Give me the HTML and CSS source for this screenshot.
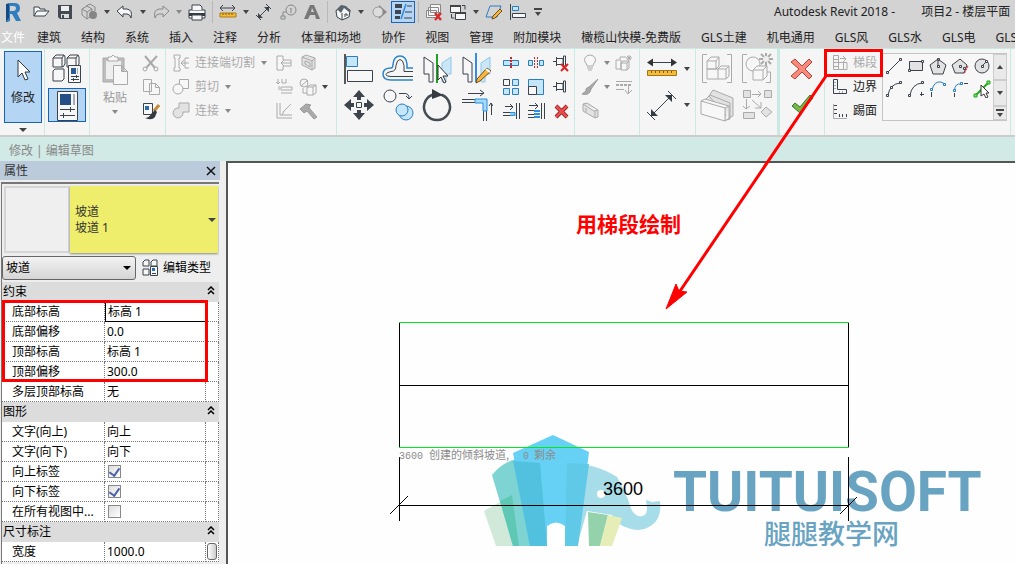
FILE: index.html
```html
<!DOCTYPE html>
<html lang="zh-CN">
<head>
<meta charset="utf-8">
<title>Autodesk Revit 2018</title>
<link rel="stylesheet" href="styles.css">
</head>
<body>
<div class="app">
<header class="titlebar">
  <button class="logo" aria-label="Revit"><svg width="24" height="22"><path d="M6 3l4-1v18l-4 1z" fill="#174a80"/><path fill-rule="evenodd" d="M9 2h5q6 0 6 5 0 4-3 5l4 8h-5l-4-7h-2v7H6l3-3zm1 3v5h3q3 0 3-3 0-2-3-2z" fill="#2f7ec0"/></svg></button>
  <div class="quick">
    <button class="qb" aria-label="打开"><svg width="18" height="18"><path class="k f" d="M2 13V4h5l1 2h5v2M2 13l3-5h12l-4 5z"/></svg></button>
    <button class="qb" aria-label="保存"><svg width="18" height="18"><path d="M2 2h14v14H4l-2-2z" fill="#434a54"/><path d="M5 3h8v5H5z" fill="#eee"/><path d="M5 11h8v4H5z" fill="#ddd"/><path d="M6 12h2v3H6z" fill="#434a54"/></svg></button>
    <button class="qb" aria-label="同步"><svg width="18" height="18"><path class="g8" d="M2 6l5-3 5 3v6l-5 4-5-4zM2 6l5 3 5-3M7 9v7M6 3l4-2 5 3v4"/><circle cx="13" cy="12" r="4" fill="#858585"/></svg></button>
    <button class="cb" aria-label="更多"></button>
    <button class="qb" aria-label="撤销"><svg width="18" height="18"><path class="k f" d="M1 8l6-5v3h4q6 1 4 9-1-4-4-4H7v3z"/></svg></button>
    <button class="cb" aria-label="更多"></button>
    <button class="qb" aria-label="重做"><svg width="18" height="18"><path class="g8" d="M17 8l-6-5v3H7q-6 1-4 9 1-4 4-4h4v3z"/></svg></button>
    <button class="cb dim" aria-label="更多"></button>
    <button class="qb" aria-label="打印"><svg width="18" height="18"><path class="k f" d="M1 7h16v8H1z"/><path d="M1 10h16v3H1z" fill="#333b44"/><path class="k f" d="M4 7V2h8l2 2v3M4 12h10v5H4z"/></svg></button>
    <span class="sep"></span>
    <button class="qb" aria-label="测量"><svg width="18" height="18"><path class="k" d="M1 5h15M4 2L1 5l3 3M13 2l3 3-3 3"/><path d="M1 10h16v4H1z" fill="#f4bc36" stroke="#b07a10"/><path d="M4 10v2M7 10v2M10 10v2M13 10v2" stroke="#8a5c00"/></svg></button>
    <button class="cb" aria-label="更多"></button>
    <button class="qb" aria-label="对齐尺寸标注"><svg width="18" height="18"><path class="k" d="M3 15L14 4M1 12l5 5M11 1l5 5"/><path d="M3 10v5h5zM9 4h5v5z" fill="#3a424c"/></svg></button>
    <button class="qb" aria-label="按类别标记"><svg width="18" height="18"><circle class="g8" cx="12" cy="7" r="5"/><path class="g8" d="M11 6l1-1v5M7 9H4v4M2 13h4v3H2z"/></svg></button>
    <button class="qb" aria-label="文字"><svg width="18" height="18"><path d="M1 16L7 2h4l6 14h-4l-1-4H7l-2 4zm7-7h3L9 5z" fill="#777" fill-rule="evenodd"/></svg></button>
    <span class="sep"></span>
    <button class="qb" aria-label="默认三维视图"><svg width="18" height="18"><path class="k f" d="M2 8l6-5 8 4-1 7-7 3-5-3z"/><path d="M1 8l6-6 5 1 5 5-2 1-5-4-3 5-3-3z" fill="#59636d"/><path class="k" d="M8 10v7M11 14v-3h2v2"/></svg></button>
    <button class="cb" aria-label="更多"></button>
    <button class="qb" aria-label="剖面"><svg width="18" height="18"><path d="M9 2l8 7-8 7z" fill="#888"/><circle cx="8" cy="9" r="5" fill="#ddd" stroke="#999"/></svg></button>
    <button class="qb on" aria-label="细线"><svg width="18" height="18"><path d="M1 1h7v4H1zM1 7h6v4H1zM1 13h5v3H1z" fill="#3d4651"/><path d="M12 1L7 16" stroke="#308be0" stroke-width="1.500"/><path class="k" d="M13 3h5M11 9h7M10 15h8"/></svg></button>
    <span class="sep"></span>
    <button class="qb" aria-label="关闭隐藏窗口"><svg width="18" height="18"><path class="g8 f" d="M5.500 1.500h10v8h-10zM3.500 4.500h10v8h-10zM1.500 7.500h10v7h-10z"/><path d="M10 10l6 7m0-7l-6 7" stroke="#d82c2c" stroke-width="2.500"/></svg></button>
    <button class="qb" aria-label="切换窗口"><svg width="18" height="18"><path class="k f" d="M1.500 2.500h10v7h-10zM6.500 9.500h10v7h-10z"/><path d="M1 3h11M6 10h11" stroke="#444" stroke-width="2"/><path class="k" d="M13 2.500h3v4M2.500 11v4h3"/></svg></button>
    <button class="cb" aria-label="更多"></button>
    <button class="qb" aria-label="编辑"><svg width="18" height="18"><path class="b" d="M5 3h11l-4 11H1z"/><path d="M8 13l7-7 2 2-7 7-3 1z" fill="#f6b83b" stroke="#704e20"/></svg></button>
    <button class="qb" aria-label="对齐"><svg width="18" height="18"><path class="k f" d="M1.500 1v16M3.500 10.500h13v4h-13z"/><path class="b f3" d="M3.500 3.500h6v4h-6z"/></svg></button>
    <button class="cb bar" aria-label="自定义"></button>
  </div>
  <span class="title">Autodesk Revit 2018 -</span><span class="doc">项目2 - 楼层平面</span>
</header>

<nav class="tabs">
  <button class="file">文件</button><button>建筑</button><button>结构</button><button>系统</button><button>插入</button><button>注释</button><button>分析</button><button>体量和场地</button><button>协作</button><button>视图</button><button>管理</button><button>附加模块</button><button>橄榄山快模-免费版</button><button>GLS土建</button><button>机电通用</button><button>GLS风</button><button>GLS水</button><button>GLS电</button><button>GLS</button>
</nav>

<section class="ribbon">
  <div class="panel p-mod">
    <div class="stack">
      <button class="modify on"><svg width="16" height="24"><path d="M3 2v17l4-4 3 7 3-1-3-7h5z" fill="#fff" stroke="#303840"/></svg><span>修改</span></button>
      <button class="cb wide" aria-label="选择"></button>
    </div>
  </div>
  <div class="panel p-prop">
    <div class="big">
      <button aria-label="类型属性"><svg width="34" height="34"><path class="k f" d="M3 6l3-3h8l1 2v7l-2 3H3zM3 6h9l2-3M12 6v9M17 6l3-3h8l1 2v7l-2 3H17zM17 6h9l2-3M26 6v9M3 19l2-2h9v10l-2 2H3z"/><path class="k f" d="M18.500 13.500h12v17h-12z"/><path d="M21 16h5v6h-5z" fill="#2c5c94"/><path d="M27.500 16v6" stroke="#a5adb6"/><path class="k" d="M21 24.500h8M26.500 23v3M21 27.500h8M23.500 26v3"/></svg></button>
      <button class="on" aria-label="属性"><svg width="34" height="34"><path class="k f" d="M7.500 2.500h20v29h-20z"/><path d="M10 5h11v11H10z" fill="#245087"/><path d="M23 5h2v11h-2z" fill="#a5adb6"/><path class="k" d="M10 20.500h15M20.500 18v5M10 26.500h15M13.500 24v5"/></svg></button>
    </div>
  </div>
  <div class="panel p-clip">
    <button class="paste"><svg width="28" height="32"><path d="M2 4h21v24H2z" fill="#bdbdbd" stroke="#aaa"/><path d="M5 7h15v18H5z" fill="#eee"/><path class="g f" d="M7 7V3h3l2-2 2 2h3v4zM12.500 11.500h8l6 6v13h-14zM20.500 11.500v6h6"/></svg><span>粘贴</span><i class="caret dim"></i></button>
    <div class="small">
      <button aria-label="剪切"><svg width="18" height="18"><path class="g" d="M3 2l10 12M15 2L4 14" stroke-width="2"/><circle class="g" cx="3" cy="15" r="2"/><circle class="g" cx="14" cy="15" r="2"/></svg></button>
      <button aria-label="复制"><svg width="18" height="18"><path class="g f" d="M1.500 1.500h8v12h-8zM7.500 5.500h6l4 4v7h-10zM13.500 5.500v4h4"/></svg></button>
      <button aria-label="匹配类型"><svg width="18" height="18"><path class="k f" d="M1.500 1.500h9v11h-9z"/><path d="M3 4h4v4H3z" fill="#286eac"/><path d="M17 3l-5 6" stroke="#c78a3a" stroke-width="3"/><path d="M13 8L9 12q-2 4-6 4 7 3 10-1l2-5z" fill="#343b43"/></svg></button>
    </div>
  </div>
  <div class="panel p-geo">
    <div class="list dimmed">
      <button><svg width="18" height="18"><path class="g f" d="M2 1h6v3H7v10h1v3H2v-3h1V4H2zM17 4h-4v10h4M17 9H9M12 6L9 9l3 3"/></svg><span>连接端切割</span><i class="caret"></i></button>
      <button><svg width="18" height="18"><path class="g f" d="M7.500 1.500h9v9h-9z"/><circle class="g f" cx="6" cy="11" r="5"/></svg><span>剪切</span><i class="caret"></i></button>
      <button><svg width="18" height="18"><path class="g f2" d="M7 1h10v9h-6a5 5 0 1 1-4-4z"/></svg><span>连接</span><i class="caret"></i></button>
    </div>
    <div class="small">
      <button aria-label="墙连接"><svg width="18" height="18"><path class="g f" d="M2 2h6v4h8v6H8v4H2zM16 9H6M9 6L6 9l3 3"/></svg></button>
      <button aria-label="梁连接"><svg width="18" height="18"><path class="g" d="M3 1v5M1 4l2 2 2-2M7 1v4h4V1M6 9h11v3H6zM6 15h11M4 8v4"/></svg></button>
      <button aria-label="拆分"><svg width="18" height="18"><path class="g" d="M2 1v15h15M5 1v12h12M8 10l8-8M7 13l2-4 7-7"/></svg></button>
    </div>
    <div class="small">
      <button aria-label="墙洞口"><svg width="18" height="18"><path class="g f2" d="M3 3l4-2 9 3v10l-3 2-10-5zM3 3l10 4v9M13 7l3-3M6 7l5 2v4l-5-3z"/></svg></button>
      <button aria-label="填色"><svg width="18" height="18"><circle class="g" cx="5" cy="5" r="4"/><path class="g f" d="M2 8l7-6M4 10v5h4M8 9l3-2h6v8l-3 2H8zM8 9h6v8M14 9l3-2"/></svg></button>
      <button aria-label="拆除"><svg width="18" height="18"><path d="M1 7l6-5 5 1-2 2 1 2 7 8-3 2-7-8-3 2z" fill="#aaa" stroke="#999"/></svg></button>
    </div>
    <div class="small narrow"><span></span><button class="cb" aria-label="更多"></button></div>
  </div>
  <div class="panel p-edit">
    <div class="big two">
      <button aria-label="对齐"><svg width="34" height="34"><path d="M3 2v30" stroke="#222" stroke-width="1.500"/><path class="b f3" d="M4.500 4.500h11v10h-11z"/><path class="k f" d="M5.500 18.500h25v11h-25z"/></svg></button>
      <button aria-label="偏移"><svg width="34" height="34"><path d="M32 28H10q-8 0-8-6t8-6q2 0 2-4 1-8 7-8t7 8v4h6" fill="none" stroke="#2b85c8" stroke-width="1.500"/><path class="k" d="M32 24.500H10q-5 0-5-2t5-3q5 0 5-6 1-6 4-6t4 6v6h9"/></svg></button>
      <button aria-label="镜像-拾取轴"><svg width="34" height="34"><path class="k f" d="M4 5l9 6v19H9v-8H4z"/><path d="M31 5l-9 6v19h4v-8h5z" fill="#cbe6f7" stroke="#8ec6e8"/><path d="M17 2v29" stroke="#21a121" stroke-width="2"/><path d="M18 13v15l3-3 3 6 2-1-3-6h5z" fill="#fff" stroke="#333"/></svg></button>
      <button aria-label="镜像-绘制轴"><svg width="34" height="34"><path class="k f" d="M4 5l9 6v19H9v-8H4z"/><path d="M31 5l-9 6v19h4v-8h5z" fill="#cbe6f7" stroke="#8ec6e8"/><path d="M17 1v29" stroke="#348ee0" stroke-width="2"/><path d="M18 27l10-11 4 3-11 10-4 2z" fill="#fbb737" stroke="#70481b"/><path d="M27 17l4 3" stroke="#fff" stroke-width="2"/></svg></button>
      <button aria-label="移动"><svg width="34" height="34"><path class="k f" d="M14.500 14.500h5v5h-5z"/><path d="M17 2l6 7h-4v3h-4V9h-4zM17 32l6-7h-4v-3h-4v3h-4zM2 17l7-6v4h3v4H9v4zM32 17l-7-6v4h-3v4h3v4z" fill="#3d444c"/></svg></button>
      <button aria-label="复制"><svg width="34" height="34"><circle class="k f" cx="9" cy="8" r="6"/><circle class="b f3" cx="25" cy="25" r="7"/><circle class="b f3" cx="21" cy="22" r="6"/><path class="k" d="M18 5.500h6q4 0 4 5M25 8l3 3 3-3"/></svg></button>
      <button aria-label="旋转"><svg width="34" height="34"><path d="M22 7a13 13 0 1 1-10 0" fill="none" stroke="#444b53" stroke-width="2.500" stroke-linecap="round"/><path d="M12 1l11 6-11 4z" fill="#343b43"/></svg></button>
      <button aria-label="修剪/延伸为角"><svg width="34" height="34"><path class="k" d="M3 11.500h13M3 14.500h13M24.500 22v11M27.500 22v11M9 5.500h15M21 2l4 3-4 3M32.500 27V15M30 18l2-3 2 3"/><path d="M16 11h12v12h-4v-8h-8z" fill="#a5dafa" stroke="#2d8fdd"/></svg></button>
    </div>
    <div class="tools">
      <button aria-label="拆分图元"><svg width="18" height="18"><path class="b f3" d="M1.500 6.500h15v5h-15z"/><path d="M9 3v12" stroke="#c92727" stroke-width="2" stroke-dasharray="2 1"/></svg></button>
      <button aria-label="用间隙拆分"><svg width="18" height="18"><path class="b f3" d="M1.500 6.500h4v5h-4zM12.500 6.500h4v5h-4z"/><path d="M7.500 3v12M10.500 3v12" stroke="#c92727" stroke-dasharray="2 1"/></svg></button>
      <button aria-label="解锁"><svg width="18" height="18"><path class="k f" d="M1 7.500h4M4.500 3v9M5 4.500h6v6H5M11.500 2v10h2V2z"/><path d="M9 10l7 7m0-7l-7 7" stroke="#d22" stroke-width="2"/></svg></button>
      <button aria-label="阵列"><svg width="18" height="18"><path class="k f" d="M1.500 1.500h6v6h-6z"/><path class="b f3" d="M10.500 1.500h6v6h-6zM1.500 10.500h6v6h-6zM10.500 10.500h6v6h-6z"/></svg></button>
      <button aria-label="缩放"><svg width="18" height="18"><path class="b f3" d="M1.500 1.500h15v15h-15z"/><path class="k f" d="M1.500 8.500h8v8h-8z"/></svg></button>
      <button aria-label="锁定"><svg width="18" height="18"><path class="k f" d="M1 8.500h4M4.500 4v9M5 5.500h6v6H5M11.500 3v11h2V3z"/></svg></button>
      <button aria-label="修剪单个图元"><svg width="18" height="18"><path class="k" d="M3 4.500h8M8 2l3 3-3 3M1 10.500h7M1 13.500h7M14.500 1v16M17.500 1v16"/><path d="M8 10.500h5v3H8" fill="#8ccdf5" stroke="#2d8fdd"/></svg></button>
      <button aria-label="修剪多个图元"><svg width="18" height="18"><path class="k" d="M2 3.500h8M8 1l3 3-3 3M1 8.500h6M1 12.500h6M1 15.500h6M14.500 1v16M17.500 1v16"/><path d="M7 9h6M7 12h6M7 15h6" stroke="#2d8fdd" stroke-width="2"/></svg></button>
      <button aria-label="删除"><svg width="18" height="18"><path d="M4 4l11 11M15 4L4 15" stroke="#8e1616" stroke-width="4"/><path d="M4 4l11 11M15 4L4 15" stroke="#e94e4e" stroke-width="2.500"/></svg></button>
    </div>
  </div>
  <div class="panel p-view">
    <div class="small">
      <button aria-label="在视图中隐藏"><svg width="18" height="18"><path class="g f" d="M6 12q0-2-2-4-2-6 5-7 7 1 5 7-2 2-2 4zM6 14h6M7 16h4"/></svg></button>
      <button aria-label="替换"><svg width="18" height="18"><path d="M17 1L8 9l2 2zM8 9q-4 1-3 4l-4 3q8 2 9-5z" fill="#aaa" stroke="#999"/></svg></button>
      <button aria-label="线处理"><svg width="18" height="18"><path class="g f2" d="M2 2l4-1 11 7v7l-3 1L2 9zM2 2l11 7 4-1M14 9v7M5 6v4"/></svg></button>
    </div>
    <div class="small narrow"><button class="cb dim" aria-label="更多"></button><button class="cb dim" aria-label="更多"></button></div>
    <div class="small">
      <button aria-label="置换图元"><svg width="18" height="18"><path class="g f" d="M1 6h5v9H1zM6 9l2-2h6v7l-2 2H6zM6 9h6v7M12 9l2-2M5 5V3h6M14 1v6M11 4h6M12 2l4 4M16 2l-4 4"/></svg></button>
      <button aria-label="线"><svg width="18" height="18"><path class="g" d="M1 3.500h16M1 11.500h8M13.500 8v7M10 12l3 4 4-4"/><path d="M1 7h16" stroke="#aaa" stroke-width="2" stroke-dasharray="3 1"/></svg></button>
    </div>
  </div>
  <div class="panel p-meas">
    <div class="big">
      <button aria-label="测量"><svg width="34" height="34"><path class="k" d="M3 10.500h28"/><path d="M2 10.500l6-4v8zM32 10.500l-6-4v8z" fill="#333"/><path d="M2.500 18.500h29v5h-29z" fill="#f2bd3c" stroke="#a87412"/><path d="M6.500 19v2M10.500 19v2M14.500 19v2M18.500 19v2M22.500 19v2M26.500 19v2" stroke="#805700"/></svg></button>
      <button aria-label="尺寸标注"><svg width="34" height="34"><path class="k" d="M6 28L27 7M2 24l8 8M23 3l8 8"/><path d="M6 21v7h7zM20 7h7v7z" fill="#333b43"/></svg></button>
    </div>
    <div class="big narrow"><button class="cb" aria-label="更多"></button><button class="cb" aria-label="更多"></button></div>
  </div>
  <div class="panel p-create">
    <div class="big two">
      <button aria-label="创建组"><svg width="34" height="34"><path class="g f" d="M7 2.500H2.500v28H7M27 2.500h4.500v28H27M7 9l4-4h8v9l-3 3H7zM7 9h9v8M16 9l3-4M7 17h11v10H7zM18 17l3-3h8v10l-3 3h-8M18 17h8v10M26 17l3-3"/></svg></button>
      <button aria-label="创建类似"><svg width="34" height="34"><path class="g f" d="M7 2.500H2.500v28H7M26 20h4.500v10.500H26"/><circle class="g f" cx="13" cy="12" r="7"/><path class="g f" d="M13 18l4-4h10v10l-4 4H13zM13 18h10v10M23 18l4-4"/><path d="M26 1v13M19 7h14M21 2l10 10M31 2L21 12" stroke="#aaa" stroke-width="2"/><circle cx="26" cy="7" r="3" fill="#eee"/></svg></button>
      <button aria-label="创建部件"><svg width="34" height="34"><path class="g f2" d="M9 8l4-6 20 8v18l-5 2zM5 12l5-5 20 8v16l-4 1z"/><path class="g f" d="M1 13l24 7v13L1 26zM1 13l4-2 24 7-4 2M29 18v12l-4 3"/></svg></button>
      <button aria-label="创建零件"><svg width="34" height="34"><path class="g f2" d="M3.500 2.500h7v7h-7zM24.500 2.500h7v7h-7zM3.500 24.500h11v6h-11zM21 24l5-5 6 5-6 5z"/><path class="g" d="M12 6.500h9M18 3l3 3-3 3M6.500 11v10M3 18l3 3 4-3M12 12l9 8M21 14v6h-6"/></svg></button>
    </div>
  </div>
  <div class="panel p-mode">
    <div class="big">
      <button aria-label="取消编辑模式"><svg width="34" height="34"><path d="M10 7l7 7 7-7 3 3-7 7 7 7-3 3-7-7-7 7-4-3 8-7-8-7z" fill="#f88a7c" stroke="#b94137"/></svg></button>
      <button aria-label="完成编辑模式"><svg width="34" height="34"><path d="M7 18l3-3 5 4L25 7l3 3-13 15z" fill="#74b84a" stroke="#37762a"/></svg></button>
    </div>
  </div>
  <div class="panel p-draw">
    <div class="list">
      <button class="dimmed"><svg width="18" height="18"><path class="g" d="M3.500 1.500h5v14h-5zM3 5.500h6M3 8.500h14M3 12.500h6M9 15.500h8v-7M13.500 9v6M10 4.500h6M13 2l3 3-3 3"/></svg><span>梯段</span></button>
      <button><svg width="18" height="18"><path class="k" d="M3.500 1.500h4v10h9v4h-13z"/><path class="g" d="M4 4.500h2M4 7.500h2M4 10.500h2M9.500 13v2M12.500 13v2"/></svg><span>边界</span></button>
      <button><svg width="18" height="18"><path class="g" d="M3.500 2v14.500H17"/><path class="k" d="M4 3.500h3M4 7.500h3M4 11.500h3M9.500 12v3M12.500 12v3M16.500 12v3"/></svg><span>踢面</span></button>
    </div>
    <div class="gallery">
      <div class="shapes">
        <button aria-label="线"><svg width="18" height="18"><path class="k" d="M3 15L15 3"/><path class="k f" d="M1.500 14.500h2v2h-2zM14.500 1.500h2v2h-2z"/></svg></button>
        <button aria-label="矩形"><svg width="18" height="18"><path class="k f2" d="M2.500 4.500h13v9h-13z"/><path class="k f" d="M1.500 12.500h2v2h-2zM14.500 3.500h2v2h-2z"/></svg></button>
        <button aria-label="内接多边形"><svg width="18" height="18"><path class="k f2" d="M9 2l8 6-3 9H4L1 8z"/><path class="k f" d="M9 2v7M8.500 1.500h2v2h-2zM8.500 8.500h2v2h-2z"/></svg></button>
        <button aria-label="外接多边形"><svg width="18" height="18"><path class="k f2" d="M9 2l7 6-3 8H4L1 8z"/><path class="k f" d="M8.500 8.500h2v2h-2zM12.500 10.500h2v2h-2z"/><path d="M17 9l-4 8" stroke="red" stroke-dasharray="2 1"/></svg></button>
        <button aria-label="圆形"><svg width="18" height="18"><circle class="k f2" cx="9" cy="9" r="7"/><path class="k f" d="M9 9l4-4M8.500 8.500h2v2h-2zM12.500 3.500h2v2h-2z"/></svg></button>
        <button aria-label="起点-终点-半径弧"><svg width="18" height="18"><path class="k" d="M3 15Q5 4 15 3"/><path class="k f" d="M1.500 14.500h2v2h-2zM5.500 6.500h2v2h-2zM14.500 1.500h2v2h-2z"/></svg></button>
        <button aria-label="圆心-端点弧"><svg width="18" height="18"><path class="k" d="M3 15Q5 4 15 3M14.500 12v4M13 14.500h4"/><path class="k f" d="M1.500 14.500h2v2h-2zM14.500 1.500h2v2h-2z"/></svg></button>
        <button aria-label="相切-端点弧"><svg width="18" height="18"><path class="k" d="M2.500 12v5"/><path class="b" d="M3 10Q5 1 12 2l4 2"/><path class="b f" d="M1.500 8.500h2v2h-2zM14.500 3.500h2v2h-2z"/></svg></button>
        <button aria-label="圆角弧"><svg width="18" height="18"><path class="k" d="M3.500 13v4M13 3.500h4"/><path class="b" d="M3.500 11q0-8 7-7"/><path class="b f" d="M2.500 9.500h2v2h-2zM9.500 2.500h2v2h-2z"/></svg></button>
        <button aria-label="拾取线"><svg width="18" height="18"><path d="M2 16L16 2" stroke="#23a81c" stroke-width="2"/><path d="M1 14h3v3H1zM14 1h3v3h-3z" fill="#7fde70" stroke="#23a81c"/><path d="M8 5v11l3-2 2 4 2-1-2-4h3z" fill="#fff" stroke="#333"/></svg></button>
      </div>
      <div class="spin"><button class="cb up" aria-label="上一行"></button><button class="cb" aria-label="下一行"></button><button class="cb bar" aria-label="展开"></button></div>
    </div>
  </div>
</section>

<div class="context">修改 | 编辑草图</div>

<main class="work">
  <aside class="props">
    <div class="props-head"><span>属性</span><button aria-label="关闭"><svg width="10" height="10"><path d="M1 1l8 8M9 1L1 9" stroke="#111" stroke-width="1.500"/></svg></button></div>
    <div class="props-body">
      <div class="type"><div class="preview"></div><button class="type-name"><span>坡道<br>坡道 1</span><i class="caret"></i></button></div>
      <div class="filter">
        <div class="pick"><select aria-label="类别"><option>坡道</option></select><i class="caret"></i></div>
        <button class="edit-type"><svg width="18" height="18"><path class="k f" d="M2 3l2-2h4v6H2zM10 3l2-2h4v6h-6zM2 10h6v6H2z"/><path class="k f" d="M9.500 7.500h7v9h-7z"/><path d="M11 9h3v3h-3z" fill="#286eac"/><path class="k" d="M11 14.500h4"/></svg><span>编辑类型</span></button>
      </div>
      <table class="grid">
        <colgroup><col class="c-name"><col><col class="c-end"></colgroup>
        <tbody>
        <tr class="group"><th colspan="2">约束</th><th><button class="fold" aria-label="折叠"><svg width="8" height="10"><path d="M1 4l3-3 3 3M1 8l3-3 3 3"/></svg></button></th></tr>
        <tr><td><label for="v1">底部标高</label></td><td class="sel"><input id="v1" value="标高 1"></td><td></td></tr>
        <tr><td><label for="v2">底部偏移</label></td><td><input id="v2" value="0.0"></td><td></td></tr>
        <tr><td><label for="v3">顶部标高</label></td><td><input id="v3" value="标高 1"></td><td></td></tr>
        <tr><td><label for="v4">顶部偏移</label></td><td><input id="v4" value="300.0"></td><td></td></tr>
        <tr><td><label for="v5">多层顶部标高</label></td><td><input id="v5" value="无"></td><td></td></tr>
        <tr class="group"><th colspan="2">图形</th><th><button class="fold" aria-label="折叠"><svg width="8" height="10"><path d="M1 4l3-3 3 3M1 8l3-3 3 3"/></svg></button></th></tr>
        <tr><td><label for="v6">文字(向上)</label></td><td><input id="v6" value="向上"></td><td></td></tr>
        <tr><td><label for="v7">文字(向下)</label></td><td><input id="v7" value="向下"></td><td></td></tr>
        <tr><td><label for="v8">向上标签</label></td><td><input id="v8" type="checkbox" checked></td><td></td></tr>
        <tr><td><label for="v9">向下标签</label></td><td><input id="v9" type="checkbox" checked></td><td></td></tr>
        <tr><td><label for="v10">在所有视图中...</label></td><td><input id="v10" type="checkbox"></td><td></td></tr>
        <tr class="group"><th colspan="2">尺寸标注</th><th><button class="fold" aria-label="折叠"><svg width="8" height="10"><path d="M1 4l3-3 3 3M1 8l3-3 3 3"/></svg></button></th></tr>
        <tr><td><label for="v11">宽度</label></td><td><input id="v11" value="1000.0"></td><td><button class="assoc" aria-label="关联参数"></button></td></tr>
        </tbody>
      </table>
    </div>
  </aside>
  <div class="canvas">
    <svg class="plan" width="787" height="401" viewBox="228 163 787 401">
      <g class="brand">
        <path d="M484 511l28-16 9 51h-25z" fill="#d0e9d9"/>
        <path d="M492 475q14-17 34-17l14 5 8 83h-35z" fill="#7dd4d2"/>
        <path d="M500 501l12-6 7 51h-6z" fill="#5ec8b4"/>
        <path d="M567 463q28 0 50 14 7 12 12 25 2 11 9 14 9 2 9-8l-1-8 6 2 8-1q2 17-8 24-11 8-24 3-11-3-16-13l-25-4-10 35h-16z" fill="#a7dde8"/>
        <path d="M513 453l40-18 36 17-12 94h-47z" fill="#66d1f5"/>
        <path d="M513 461l27 2 7 83h-17z" fill="#51c1df"/>
        <path d="M567 463l22 1-11 82h-13z" fill="#60c9e7"/>
        <path d="M588 512l20 3-8 31h-11z" fill="#93d2ab"/>
        <path d="M608 515l14 3-10 28h-12z" fill="#e7edb7"/>
        <path d="M547 546v-20q9-7 18 0v20z" fill="#fff"/>
        <circle cx="601" cy="494" r="4" fill="#fff"/>
        <text x="673" y="511" class="brand-en">TUITUISOFT</text>
        <text x="764" y="544" class="brand-cn">腿腿教学网</text>
      </g>
      <path class="ink" d="M399.500 322v125M848.500 322v125M399 385.500h450M399.500 457v64M848.500 457v64M399 505.500h450M390 514l18-18M840 514l17-17"/>
      <path class="edge" d="M399 322.500h450M399 447.500h450"/>
      <text y="459" class="hint"><tspan x="399" class="num">3600</tspan> <tspan x="429">创建的倾斜坡道,</tspan> <tspan x="523" class="num">0</tspan> <tspan x="534">剩余</tspan></text>
      <text x="603" y="495" class="measure">3600</text>
      <text x="576" y="232" class="callout">用梯段绘制</text>
    </svg>
  </div>
</main>
<svg class="marks" width="1015" height="564"><path d="M3.500 301.500h203v79h-203zM825.500 50.500h56v25h-56z"/><path d="M826 76L676 297"/><path class="tip" d="M666 309l10-25 3 7 8 1z"/></svg>
</div>
</body>
</html>
```
FILE: styles.css
```css
* { box-sizing: border-box; }
body { margin: 0; font: 12px/16px "Noto Sans", "Noto Sans CJK SC", sans-serif; color: #222; background: #eee; }
button, input, select { font: inherit; color: inherit; }
button { padding: 0; border: 0; background: none; }
svg { display: block; flex: none; }
.app { position: relative; display: flex; flex-direction: column; height: 100vh; overflow: hidden; }

.k { stroke: #3a424c; fill: none; }
.g { stroke: #aaa; fill: none; }
.g8 { stroke: #888; fill: none; }
.b { stroke: #2a7fc0; fill: none; }
.f { fill: #f7f7f7; }
.f2 { fill: #e2e2e2; }
.f3 { fill: #c5e6f8; }

.titlebar { display: flex; align-items: center; height: 24px; background: #d3d3d3; overflow: hidden; white-space: nowrap; flex: none; }
.logo { width: 29px; }
.quick { display: flex; align-items: center; width: 745px; flex: none; }
.qb { display: grid; place-items: center; width: 24px; height: 22px; }
.on { background: #b5d5f5; border: 1px solid #1764b8; }
.cb { display: grid; place-items: center; width: 12px; height: 22px; }
.cb::after, .caret { content: ""; border: 3px solid transparent; border-top: 4px solid #444; border-bottom: 0; }
.cb.up::after { border-top: 0; border-bottom: 4px solid #444; }
.cb.dim::after, .caret.dim, .dimmed .caret { border-top-color: #888; }
.cb.bar { align-content: center; gap: 2px; width: 16px; }
.cb.bar::before { content: ""; width: 8px; height: 2px; background: #444; }
.sep { width: 1px; height: 22px; margin: 0 3px; background: #b8b8b8; }
.title { font-size: 12px; }
.doc { margin-left: 26px; }

.tabs { display: flex; align-items: center; gap: 20px; height: 24px; padding: 4px 0 0 1px; background: #d3d3d3; overflow: hidden; white-space: nowrap; flex: none; }
.tabs button { flex: none; }
.tabs .file { margin-right: -8px; color: #fff; }

.ribbon { display: flex; height: 89px; padding-left: 1px; background: #f5f5f5; border-top: 1px solid #c9e9e3; border-bottom: 2px solid #ccc; overflow: hidden; flex: none; }
.panel { display: flex; flex: none; padding-top: 2px; border-right: 1px solid #c9e9e3; }
.p-mod { width: 44px; padding-left: 3px; }
.p-prop { width: 45px; padding-left: 2px; }
.p-clip { width: 76px; padding-left: 5px; gap: 4px; }
.p-geo { width: 171px; padding-left: 3px; }
.p-edit { width: 238px; padding-left: 2px; gap: 3px; }
.p-view { width: 65px; padding-left: 3px; }
.p-meas { width: 56px; padding-left: 2px; }
.p-create { width: 84px; padding-left: 1px; border-right-width: 3px; }
.p-mode { width: 45px; padding-left: 2px; }
.p-draw { width: 186px; padding-left: 2px; }
.modify { display: flex; flex-direction: column; align-items: center; gap: 8px; width: 38px; height: 72px; padding-top: 6px; }
.cb.wide { width: 38px; height: 14px; }
.cb.wide::after { border-width: 4px 4px 0; }
.big, .small, .tools { display: grid; height: 72px; }
.big { grid-template: repeat(2, 36px) / 40px; }
.big.two { grid-template-columns: repeat(2, 40px); }
.p-edit .big.two { grid-template-columns: repeat(4, 39px); }
.small { grid-template: repeat(3, 24px) / 24px; }
.tools { grid-template: repeat(3, 24px) / repeat(3, 25px); }
.big button, .small button, .tools button, .shapes button { display: grid; place-items: center; }
.small.narrow, .big.narrow { grid-template-columns: 10px; }
.narrow .cb { width: 10px; height: 100%; }
.p-prop .on { width: 38px; margin: 1px; }
.paste { display: flex; flex-direction: column; align-items: center; gap: 6px; width: 40px; height: 72px; padding-top: 3px; color: #999; }
.paste span { line-height: 12px; }
.list { display: flex; flex-direction: column; width: 103px; }
.p-draw .list { width: 55px; }
.list button { display: flex; align-items: center; gap: 5px; height: 24px; padding-left: 3px; white-space: nowrap; }
.list .dimmed, .list.dimmed { color: #aaa; }
.list .caret { margin-left: 1px; }
.gallery { display: flex; width: 125px; height: 68px; margin-top: 2px; background: #f7f7f7; border: 1px solid #c4c4c4; }
.shapes { display: grid; grid-template: repeat(2, 23px) / repeat(5, 22px); flex: 1; }
.spin { display: grid; grid-template-rows: 26px 26px 14px; width: 14px; }
.spin .cb { width: 14px; height: 100%; background: #e9e9e9; border: 1px solid #ccc; }

.context { height: 24px; padding: 6px 0 0 9px; background: #d2eae6; color: #888; flex: none; }

.work { display: flex; flex: 1; gap: 6px; min-height: 0; background: #eee; }
.props { display: flex; flex-direction: column; width: 220px; flex: none; overflow: hidden; }
.props-head { display: flex; align-items: center; justify-content: space-between; height: 19px; padding: 0 4px; background: #bccbdc; color: #333; flex: none; }
.props-body { flex: 1; margin: 2px 1px 0; border: solid #777; border-width: 2px 0 0 1px; min-height: 0; overflow: hidden; }
.type { display: flex; height: 70px; padding: 2px 1px 1px 2px; }
.preview { width: 66px; border: 2px solid #d5d5d5; background: #efefef; }
.type-name { display: flex; flex: 1; align-items: center; justify-content: space-between; padding: 0 2px 0 5px; background: #eeee6c; box-shadow: 0 1px 2px #888; text-align: left; color: #333; }
.type-name .caret { border-width: 4px 4px 0; }
.filter { display: flex; align-items: center; gap: 5px; height: 28px; }
.pick { display: flex; align-items: center; width: 134px; height: 24px; padding: 0 4px 0 3px; border: 1px solid #666; border-radius: 3px; background: linear-gradient(#f3f3f3, #d5d5d5); }
.pick .caret { border-width: 4px 4px 0; border-top-color: #000; }
.pick select { flex: 1; appearance: none; padding: 0; border: 0; background: none; color: #000; }
.edit-type { display: flex; align-items: center; gap: 4px; color: #000; }
.grid { width: 100%; table-layout: fixed; border-collapse: separate; border-spacing: 0; color: #000; background: #fff; }
.c-name { width: 103px; }
.c-end { width: 13px; }
.grid th, .grid td { height: 20px; padding: 0; line-height: 16px; }
.grid td { border-right: 1px dotted #777; border-bottom: 1px dotted #777; }
.grid td:first-child { padding-left: 10px; white-space: nowrap; }
.grid th { font-weight: normal; text-align: left; padding-left: 1px; background: #dcdcdc; }
.grid input:not([type]) { display: block; width: 100%; height: 16px; padding: 0 2px; border: 0; background: none; outline: none; }
.grid .sel { border: solid #000; border-width: 0 0 1px 1px; }
.grid input[type="checkbox"] { display: grid; place-items: center; appearance: none; width: 13px; height: 13px; margin: 0 3px; border: 1px solid #888; background: linear-gradient(135deg, #ddd, #fff); }
.grid input:checked::after { content: ""; width: 5px; height: 8px; margin-bottom: 2px; border: solid #4a62a5; border-width: 0 2px 2px 0; transform: rotate(35deg); }
.fold path { fill: none; stroke: #000; stroke-width: 1.5; }
.assoc { display: block; width: 10px; height: 17px; margin: 0 1px; border: 1px solid #666; border-radius: 3px; background: linear-gradient(90deg, #fff, #ccc); }

.canvas { flex: 1; min-width: 0; border: solid #555; border-width: 2px 0 0 2px; background: #fefefe; overflow: hidden; }
.ink { fill: none; stroke: #000; }
.edge { fill: none; stroke: #00e81c; }
.brand-en { font: 700 55px Roboto, sans-serif; fill: #68a3c2; }
.brand-cn { font: 500 27px "Noto Sans CJK SC", sans-serif; fill: #68a3c2; }
.hint { font: 11px "Noto Sans CJK SC", sans-serif; fill: #8b8b8b; }
.hint .num { font: 10px "Liberation Mono", monospace; }
.measure { font: 18px "Liberation Sans", sans-serif; fill: #000; }
.callout { font: 700 21px "Noto Sans CJK SC", sans-serif; fill: #f00; }
.marks { position: absolute; left: 0; top: 0; pointer-events: none; }
.marks path { fill: none; stroke: #f00; stroke-width: 3; }
.marks .tip { fill: #f00; stroke-width: 1; }
```
